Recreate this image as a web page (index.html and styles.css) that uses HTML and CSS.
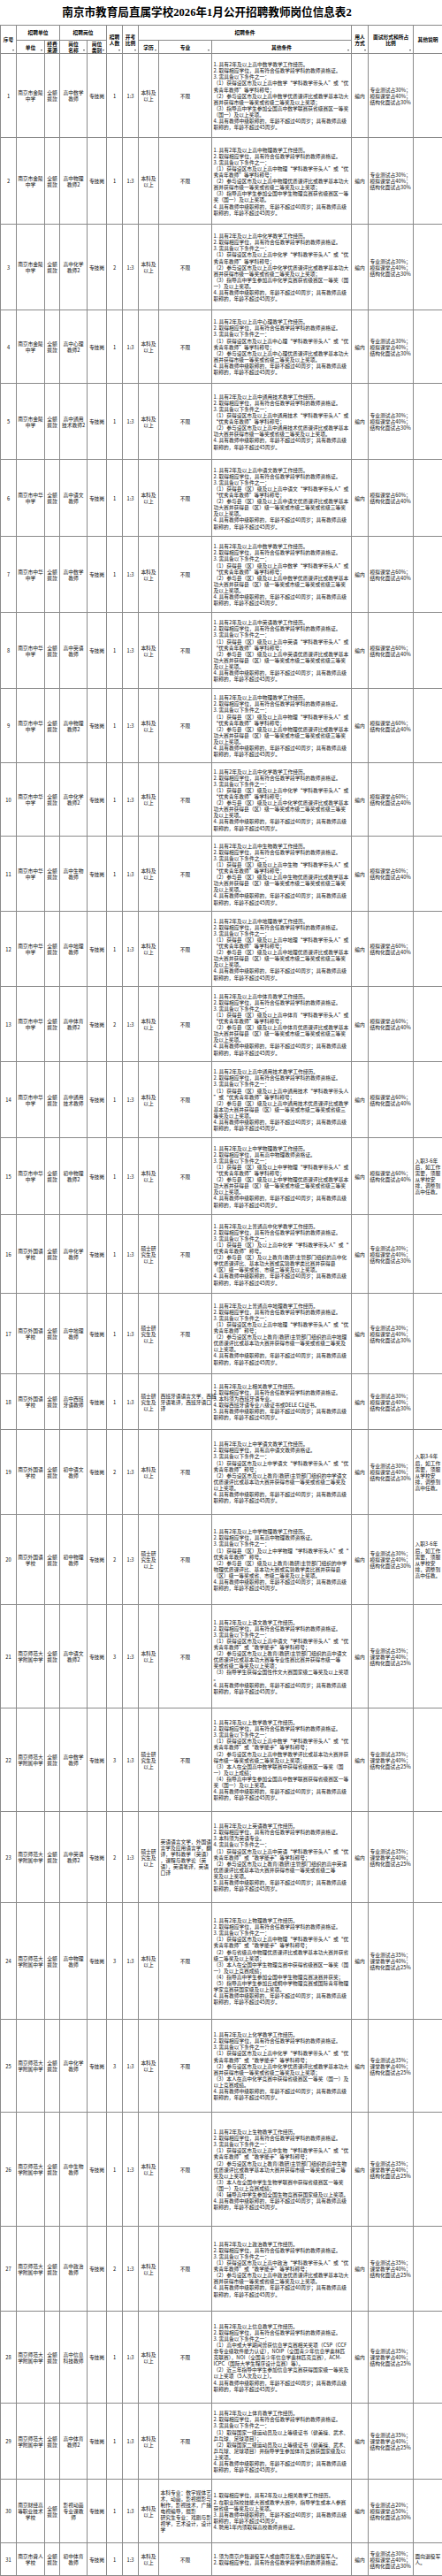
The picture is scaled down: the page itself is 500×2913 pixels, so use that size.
FILE: index.html
```html
<!DOCTYPE html>
<html lang="zh-CN">
<head>
<meta charset="utf-8">
<title>南京市教育局直属学校2026年1月公开招聘教师岗位信息表2</title>
<link rel="stylesheet" href="styles.css">
</head>
<body>
<table class="sheet">
<colgroup>
<col class="k1"><col class="k2"><col class="k3"><col class="k4"><col class="k5"><col class="k6"><col class="k7"><col class="k8"><col class="k9"><col class="k10"><col class="k11"><col class="k12"><col class="k13">
</colgroup>
<thead>
<tr class="title"><td colspan="12">南京市教育局直属学校2026年1月公开招聘教师岗位信息表2</td><td></td></tr>
<tr class="h1">
<th rowspan="2">序号<i class="dd"></i></th>
<th colspan="2">招聘单位</th>
<th colspan="2">招聘岗位</th>
<th rowspan="2">招聘<br>人数<i class="dd"></i></th>
<th rowspan="2">开考<br>比例<i class="dd"></i></th>
<th colspan="3">招聘条件</th>
<th rowspan="2">用人<br>方式<i class="dd"></i></th>
<th rowspan="2">面试形式和所占<br>比例<i class="dd"></i></th>
<th rowspan="2">其他说明</th>
</tr>
<tr class="h2">
<th>单位<i class="dd"></i></th>
<th>经费<br>来源<i class="dd"></i></th>
<th>岗位<br>名称<i class="dd"></i></th>
<th>岗位<br>类别<i class="dd"></i></th>
<th>学历<i class="dd"></i></th>
<th>专业<i class="dd"></i></th>
<th>其他条件<i class="dd"></i></th>
</tr>
</thead>
<tbody>
<tr><td>1</td><td>南京市金陵<br>中学</td><td>全额<br>拨款</td><td>高中数学<br>教师</td><td>专技岗</td><td>1</td><td>1:3</td><td>本科及<br>以上</td><td>不限</td>
<td class="l">1. 具有2年及以上高中数学教学工作经历。<br>2. 取得相应学位，具有符合任教学段学科的教师资格证。<br>3. 需具备以下条件之一：<br>（1）获得设区市及以上高中数学“学科教学带头人”或“优<br>秀青年教师”等学科称号；<br>（2）参与设区市及以上高中数学优质课评比或教学基本功大<br>赛并获得市级一等奖或省级二等奖及以上奖项；<br>（3）指导高中学生参加全国高中数学联赛获省级赛区一等奖<br>（国一）及以上奖项。<br>4. 具有教师中级职称的，年龄不超过40周岁；具有教师高级<br>职称的，年龄不超过45周岁。</td>
<td>编内</td><td class="l">专业测试占30%；<br>模拟课堂占40%；<br>结构化面试占30%</td><td></td></tr>

<tr><td>2</td><td>南京市金陵<br>中学</td><td>全额<br>拨款</td><td>高中物理<br>教师2</td><td>专技岗</td><td>1</td><td>1:3</td><td>本科及<br>以上</td><td>不限</td>
<td class="l">1. 具有2年及以上高中物理教学工作经历。<br>2. 取得相应学位，具有符合任教学段学科的教师资格证。<br>3. 需具备以下条件之一：<br>（1）获得设区市及以上高中物理“学科教学带头人”或“优<br>秀青年教师”等学科称号；<br>（2）参与设区市及以上高中物理优质课评比或教学基本功大<br>赛并获得市级一等奖或省级二等奖及以上奖项；<br>（3）指导高中学生参加全国中学生物理竞赛获省级赛区一等<br>奖（国一）及以上奖项。<br>4. 具有教师中级职称的，年龄不超过40周岁；具有教师高级<br>职称的，年龄不超过45周岁。</td>
<td>编内</td><td class="l">专业测试占30%；<br>模拟课堂占40%；<br>结构化面试占30%</td><td></td></tr>

<tr><td>3</td><td>南京市金陵<br>中学</td><td>全额<br>拨款</td><td>高中化学<br>教师2</td><td>专技岗</td><td>2</td><td>1:3</td><td>本科及<br>以上</td><td>不限</td>
<td class="l">1. 具有2年及以上高中化学教学工作经历。<br>2. 取得相应学位，具有符合任教学段学科的教师资格证。<br>3. 需具备以下条件之一：<br>（1）获得设区市及以上高中化学“学科教学带头人”或“优<br>秀青年教师”等学科称号；<br>（2）参与设区市及以上高中化学优质课评比或教学基本功大<br>赛并获得市级一等奖或省级二等奖及以上奖项；<br>（3）指导高中学生参加高中化学竞赛获省级赛区一等奖（国<br>一）及以上奖项。<br>4. 具有教师中级职称的，年龄不超过40周岁；具有教师高级<br>职称的，年龄不超过45周岁。</td>
<td>编内</td><td class="l">专业测试占30%；<br>模拟课堂占40%；<br>结构化面试占30%</td><td></td></tr>

<tr><td>4</td><td>南京市金陵<br>中学</td><td>全额<br>拨款</td><td>高中心理<br>教师2</td><td>专技岗</td><td>1</td><td>1:3</td><td>本科及<br>以上</td><td>不限</td>
<td class="l">1. 具有2年及以上高中心理教学工作经历。<br>2. 取得相应学位，具有符合任教学段学科的教师资格证。<br>3. 需具备以下条件之一：<br>（1）获得设区市及以上高中心理“学科教学带头人”或“优<br>秀青年教师”等学科称号；<br>（2）参与设区市及以上高中心理优质课评比或教学基本功大<br>赛并获得市级一等奖或省级二等奖及以上奖项。<br>4. 具有教师中级职称的，年龄不超过40周岁；具有教师高级<br>职称的，年龄不超过45周岁。</td>
<td>编内</td><td class="l">专业测试占30%；<br>模拟课堂占40%；<br>结构化面试占30%</td><td></td></tr>

<tr><td>5</td><td>南京市金陵<br>中学</td><td>全额<br>拨款</td><td>高中通用<br>技术教师2</td><td>专技岗</td><td>1</td><td>1:3</td><td>本科及<br>以上</td><td>不限</td>
<td class="l">1. 具有2年及以上高中通用技术教学工作经历。<br>2. 取得相应学位，具有符合任教学段学科的教师资格证。<br>3. 需具备以下条件之一：<br>（1）获得设区市及以上高中通用技术“学科教学带头人”或<br>“优秀青年教师”等学科称号；<br>（2）参与设区市及以上高中通用技术优质课评比或教学基本<br>功大赛并获得市级一等奖或省级二等奖及以上奖项。<br>4. 具有教师中级职称的，年龄不超过40周岁；具有教师高级<br>职称的，年龄不超过45周岁。</td>
<td>编内</td><td class="l">专业测试占30%；<br>模拟课堂占40%；<br>结构化面试占30%</td><td></td></tr>

<tr><td>6</td><td>南京市中华<br>中学</td><td>全额<br>拨款</td><td>高中语文<br>教师</td><td>专技岗</td><td>1</td><td>1:3</td><td>本科及<br>以上</td><td>不限</td>
<td class="l">1. 具有2年及以上高中语文教学工作经历。<br>2. 取得相应学位，具有符合任教学段学科的教师资格证。<br>3. 需具备以下条件之一：<br>（1）获得县（区）级及以上高中语文“学科教学带头人”或<br>“优秀青年教师”等学科称号；<br>（2）参与县（区）级及以上高中语文优质课评比或教学基本<br>功大赛并获得县（区）级一等奖或市级二等奖或省级三等奖<br>及以上奖项。<br>4. 具有教师中级职称的，年龄不超过40周岁；具有教师高级<br>职称的，年龄不超过45周岁。</td>
<td>编内</td><td class="l">模拟课堂占60%；<br>结构化面试占40%</td><td></td></tr>

<tr><td>7</td><td>南京市中华<br>中学</td><td>全额<br>拨款</td><td>高中数学<br>教师</td><td>专技岗</td><td>1</td><td>1:3</td><td>本科及<br>以上</td><td>不限</td>
<td class="l">1. 具有2年及以上高中数学教学工作经历。<br>2. 取得相应学位，具有符合任教学段学科的教师资格证。<br>3. 需具备以下条件之一：<br>（1）获得县（区）级及以上高中数学“学科教学带头人”或<br>“优秀青年教师”等学科称号；<br>（2）参与县（区）级及以上高中数学优质课评比或教学基本<br>功大赛并获得县（区）级一等奖或市级二等奖或省级三等奖<br>及以上奖项。<br>4. 具有教师中级职称的，年龄不超过40周岁；具有教师高级<br>职称的，年龄不超过45周岁。</td>
<td>编内</td><td class="l">模拟课堂占60%；<br>结构化面试占40%</td><td></td></tr>

<tr><td>8</td><td>南京市中华<br>中学</td><td>全额<br>拨款</td><td>高中英语<br>教师</td><td>专技岗</td><td>1</td><td>1:3</td><td>本科及<br>以上</td><td>不限</td>
<td class="l">1. 具有2年及以上高中英语教学工作经历。<br>2. 取得相应学位，具有符合任教学段学科的教师资格证。<br>3. 需具备以下条件之一：<br>（1）获得县（区）级及以上高中英语“学科教学带头人”或<br>“优秀青年教师”等学科称号；<br>（2）参与县（区）级及以上高中英语优质课评比或教学基本<br>功大赛并获得县（区）级一等奖或市级二等奖或省级三等奖<br>及以上奖项。<br>4. 具有教师中级职称的，年龄不超过40周岁；具有教师高级<br>职称的，年龄不超过45周岁。</td>
<td>编内</td><td class="l">模拟课堂占60%；<br>结构化面试占40%</td><td></td></tr>

<tr><td>9</td><td>南京市中华<br>中学</td><td>全额<br>拨款</td><td>高中物理<br>教师2</td><td>专技岗</td><td>1</td><td>1:3</td><td>本科及<br>以上</td><td>不限</td>
<td class="l">1. 具有2年及以上高中物理教学工作经历。<br>2. 取得相应学位，具有符合任教学段学科的教师资格证。<br>3. 需具备以下条件之一：<br>（1）获得县（区）级及以上高中物理“学科教学带头人”或<br>“优秀青年教师”等学科称号；<br>（2）参与县（区）级及以上高中物理优质课评比或教学基本<br>功大赛并获得县（区）级一等奖或市级二等奖或省级三等奖<br>及以上奖项。<br>4. 具有教师中级职称的，年龄不超过40周岁；具有教师高级<br>职称的，年龄不超过45周岁。</td>
<td>编内</td><td class="l">模拟课堂占60%；<br>结构化面试占40%</td><td></td></tr>

<tr><td>10</td><td>南京市中华<br>中学</td><td>全额<br>拨款</td><td>高中化学<br>教师2</td><td>专技岗</td><td>1</td><td>1:3</td><td>本科及<br>以上</td><td>不限</td>
<td class="l">1. 具有2年及以上高中化学教学工作经历。<br>2. 取得相应学位，具有符合任教学段学科的教师资格证。<br>3. 需具备以下条件之一：<br>（1）获得县（区）级及以上高中化学“学科教学带头人”或<br>“优秀青年教师”等学科称号；<br>（2）参与县（区）级及以上高中化学优质课评比或教学基本<br>功大赛并获得县（区）级一等奖或市级二等奖或省级三等奖<br>及以上奖项。<br>4. 具有教师中级职称的，年龄不超过40周岁；具有教师高级<br>职称的，年龄不超过45周岁。</td>
<td>编内</td><td class="l">模拟课堂占60%；<br>结构化面试占40%</td><td></td></tr>

<tr><td>11</td><td>南京市中华<br>中学</td><td>全额<br>拨款</td><td>高中生物<br>教师</td><td>专技岗</td><td>1</td><td>1:3</td><td>本科及<br>以上</td><td>不限</td>
<td class="l">1. 具有2年及以上高中生物教学工作经历。<br>2. 取得相应学位，具有符合任教学段学科的教师资格证。<br>3. 需具备以下条件之一：<br>（1）获得县（区）级及以上高中生物“学科教学带头人”或<br>“优秀青年教师”等学科称号；<br>（2）参与县（区）级及以上高中生物优质课评比或教学基本<br>功大赛并获得县（区）级一等奖或市级二等奖或省级三等奖<br>及以上奖项。<br>4. 具有教师中级职称的，年龄不超过40周岁；具有教师高级<br>职称的，年龄不超过45周岁。</td>
<td>编内</td><td class="l">模拟课堂占60%；<br>结构化面试占40%</td><td></td></tr>

<tr><td>12</td><td>南京市中华<br>中学</td><td>全额<br>拨款</td><td>高中地理<br>教师</td><td>专技岗</td><td>1</td><td>1:3</td><td>本科及<br>以上</td><td>不限</td>
<td class="l">1. 具有2年及以上高中地理教学工作经历。<br>2. 取得相应学位，具有符合任教学段学科的教师资格证。<br>3. 需具备以下条件之一：<br>（1）获得县（区）级及以上高中地理“学科教学带头人”或<br>“优秀青年教师”等学科称号；<br>（2）参与县（区）级及以上高中地理优质课评比或教学基本<br>功大赛并获得县（区）级一等奖或市级二等奖或省级三等奖<br>及以上奖项。<br>4. 具有教师中级职称的，年龄不超过40周岁；具有教师高级<br>职称的，年龄不超过45周岁。</td>
<td>编内</td><td class="l">模拟课堂占60%；<br>结构化面试占40%</td><td></td></tr>

<tr><td>13</td><td>南京市中华<br>中学</td><td>全额<br>拨款</td><td>高中体育<br>教师2</td><td>专技岗</td><td>2</td><td>1:3</td><td>本科及<br>以上</td><td>不限</td>
<td class="l">1. 具有2年及以上高中体育教学工作经历。<br>2. 取得相应学位，具有符合任教学段学科的教师资格证。<br>3. 需具备以下条件之一：<br>（1）获得县（区）级及以上高中体育“学科教学带头人”或<br>“优秀青年教师”等学科称号；<br>（2）参与县（区）级及以上高中体育优质课评比或教学基本<br>功大赛并获得县（区）级一等奖或市级二等奖或省级三等奖<br>及以上奖项。<br>4. 具有教师中级职称的，年龄不超过40周岁；具有教师高级<br>职称的，年龄不超过45周岁。</td>
<td>编内</td><td class="l">模拟课堂占60%；<br>结构化面试占40%</td><td></td></tr>

<tr><td>14</td><td>南京市中华<br>中学</td><td>全额<br>拨款</td><td>高中通用<br>技术教师</td><td>专技岗</td><td>1</td><td>1:3</td><td>本科及<br>以上</td><td>不限</td>
<td class="l">1. 具有2年及以上高中通用技术教学工作经历。<br>2. 取得相应学位，具有符合任教学段学科的教师资格证。<br>3. 需具备以下条件之一：<br>（1）获得县（区）级及以上高中通用技术“学科教学带头人<br>”或“优秀青年教师”等学科称号；<br>（2）参与县（区）级及以上高中通用技术优质课评比或教学<br>基本功大赛并获得县（区）级一等奖或市级二等奖或省级三<br>等奖及以上奖项。<br>4. 具有教师中级职称的，年龄不超过40周岁；具有教师高级<br>职称的，年龄不超过45周岁。</td>
<td>编内</td><td class="l">模拟课堂占60%；<br>结构化面试占40%</td><td></td></tr>

<tr><td>15</td><td>南京市中华<br>中学</td><td>全额<br>拨款</td><td>初中物理<br>教师2</td><td>专技岗</td><td>1</td><td>1:3</td><td>本科及<br>以上</td><td>不限</td>
<td class="l">1. 具有2年及以上中学物理教学工作经历。<br>2. 取得相应学位，具有高中物理教师资格证。<br>3. 需具备以下条件之一：<br>（1）获得县（区）级及以上中学物理“学科教学带头人”或<br>“优秀青年教师”等学科称号；<br>（2）参与县（区）级及以上中学物理优质课评比或教学基本<br>功大赛并获得县（区）级一等奖或市级二等奖或省级三等奖<br>及以上奖项。<br>4. 具有教师中级职称的，年龄不超过40周岁；具有教师高级<br>职称的，年龄不超过45周岁。</td>
<td>编内</td><td class="l">模拟课堂占60%；<br>结构化面试占40%</td><td class="l">入职3-6年<br>后，如工作<br>需要，须服<br>从学校安<br>排，调整到<br>高中任教。</td></tr>

<tr><td>16</td><td>南京外国语<br>学校</td><td>全额<br>拨款</td><td>高中化学<br>教师</td><td>专技岗</td><td>1</td><td>1:3</td><td>硕士研<br>究生及<br>以上</td><td>不限</td>
<td class="l">1. 具有2年及以上普通高中化学教学工作经历。<br>2. 取得相应学位，具有符合任教学段学科的教师资格证。<br>3. 需具备以下条件之一：<br>（1）获得县（区）及以上高中化学“学科教学带头人”或“<br>优秀青年教师”称号。<br>（2）参与县（区）及以上教育(教研)主管部门组织的高中化<br>学优质课评比、基本功大赛或实验教学类比赛并获得县<br>（区）级一等奖或省、市级二等奖及以上奖项。<br>4. 具有教师中级职称的，年龄不超过40周岁；具有教师高级<br>职称的，年龄不超过45周岁。</td>
<td>编内</td><td class="l">专业测试占30%；<br>模拟课堂占40%；<br>结构化面试占30%</td><td></td></tr>

<tr><td>17</td><td>南京外国语<br>学校</td><td>全额<br>拨款</td><td>高中地理<br>教师</td><td>专技岗</td><td>1</td><td>1:3</td><td>硕士研<br>究生及<br>以上</td><td>不限</td>
<td class="l">1. 具有2年及以上普通高中地理教学工作经历。<br>2. 取得相应学位，具有符合任教学段学科的教师资格证。<br>3. 需具备以下条件之一：<br>（1）获得设区市及以上高中地理“学科教学带头人”或“优<br>秀青年教师”称号；<br>（2）参与设区市及以上教育(教研)主管部门组织的高中地理<br>优质课评比或基本功大赛并获得市级一等奖或省级二等奖及<br>以上奖项。<br>4. 具有教师中级职称的，年龄不超过40周岁；具有教师高级<br>职称的，年龄不超过45周岁。</td>
<td>编内</td><td class="l">专业测试占30%；<br>模拟课堂占40%；<br>结构化面试占30%</td><td></td></tr>

<tr><td>18</td><td>南京外国语<br>学校</td><td>全额<br>拨款</td><td>高中西班<br>牙语教师</td><td>专技岗</td><td>1</td><td>1:3</td><td>硕士研<br>究生及<br>以上</td><td class="l">西班牙语语言文学，西班<br>牙语笔译，西班牙语口<br>译</td>
<td class="l">1. 具有2年及以上相关教学工作经历。<br>2. 取得相应学位，具有符合任教学段学科的教师资格证。<br>3. 本科须为西班牙语专业。<br>4. 取得西班牙语专业八级证书或DELE C1证书。<br>5. 具有教师中级职称的，年龄不超过40周岁；具有教师高级<br>职称的，年龄不超过45周岁。</td>
<td>编内</td><td class="l">专业测试占30%；<br>模拟课堂占40%；<br>结构化面试占30%</td><td></td></tr>

<tr><td>19</td><td>南京外国语<br>学校</td><td>全额<br>拨款</td><td>初中语文<br>教师</td><td>专技岗</td><td>2</td><td>1:3</td><td>本科及<br>以上</td><td>不限</td>
<td class="l">1. 具有2年及以上中学语文教学工作经历。<br>2. 取得相应学位，具有高中语文教师资格证。<br>3. 需具备以下条件之一：<br>（1）获得设区市及以上中学语文“学科教学带头人”或“优<br>秀青年教师”称号；<br>（2）参与设区市及以上教育(教研)主管部门组织的中学语文<br>优质课评比或基本功大赛并获得市级一等奖或省级二等奖及<br>以上奖项。<br>4. 具有教师中级职称的，年龄不超过40周岁；具有教师高级<br>职称的，年龄不超过45周岁。</td>
<td>编内</td><td class="l">专业测试占30%；<br>模拟课堂占40%；<br>结构化面试占30%</td><td class="l">入职3-6年<br>后，如工作<br>需要，须服<br>从学校安<br>排，调整到<br>高中任教。</td></tr>

<tr><td>20</td><td>南京外国语<br>学校</td><td>全额<br>拨款</td><td>初中物理<br>教师</td><td>专技岗</td><td>2</td><td>1:3</td><td>硕士研<br>究生及<br>以上</td><td>不限</td>
<td class="l">1. 具有2年及以上中学物理教学工作经历。<br>2. 取得相应学位，具有高中物理教师资格证。<br>3. 需具备以下条件之一：<br>（1）获得县（区）及以上中学物理“学科教学带头人”或“<br>优秀青年教师”称号。<br>（2）参与县（区）级及以上教育(教研)主管部门组织的中学<br>物理优质课评比、基本功大赛或实验教学类比赛并获得县<br>（区）级一等奖或省、市级二等奖及以上奖项。<br>4. 具有教师中级职称的，年龄不超过40周岁；具有教师高级<br>职称的，年龄不超过45周岁。</td>
<td>编内</td><td class="l">专业测试占30%；<br>模拟课堂占40%；<br>结构化面试占30%</td><td class="l">入职3-6年<br>后，如工作<br>需要，须服<br>从学校安<br>排，调整到<br>高中任教。</td></tr>

<tr><td>21</td><td>南京师范大<br>学附属中学</td><td>全额<br>拨款</td><td>高中语文<br>教师2</td><td>专技岗</td><td>3</td><td>1:3</td><td>本科及<br>以上</td><td>不限</td>
<td class="l">1. 具有2年及以上语文教学工作经历。<br>2. 取得相应学位，具有符合任教学段学科的教师资格证。<br>3. 需具备以下条件之一：<br>（1）获得设区市及以上高中语文“学科教学带头人”或“优<br>秀青年教师”或“教学能手”等学科称号；<br>（2）参与设区市及以上教育(教研)主管部门组织的高中语文<br>优质课评比或基本功大赛等专业性赛比赛并获得市级一等<br>奖或省级二等奖及以上奖项；<br>（3）指导学生获得全国性作文大赛国家级二等奖及以上奖项<br>。<br>4. 具有教师中级职称的，年龄不超过40周岁；具有教师高级<br>职称的，年龄不超过45周岁。</td>
<td>编内</td><td class="l">专业测试占35%；<br>课堂教学占40%；<br>结构化面试占25%</td><td></td></tr>

<tr><td>22</td><td>南京师范大<br>学附属中学</td><td>全额<br>拨款</td><td>高中数学<br>教师</td><td>专技岗</td><td>3</td><td>1:3</td><td>硕士研<br>究生及<br>以上</td><td>不限</td>
<td class="l">1. 具有2年及以上数学教学工作经历。<br>2. 取得相应学位，具有符合任教学段学科的教师资格证。<br>3. 需具备以下条件之一：<br>（1）获得设区市及以上高中数学“学科教学带头人”或“优<br>秀青年教师”或“教学能手”等学科称号；<br>（2）参与设区市及以上高中数学教学评比或基本功大赛并获<br>得市级一等奖或省级二等奖及以上奖项；<br>（3）本人在全国高中数学联赛中获得省级赛区一等奖（国<br>一）及以上成绩；<br>（4）指导高中学生参加全国高中数学联赛获得省级赛区一等<br>奖（国一）及以上奖项。<br>4. 具有教师中级职称的，年龄不超过40周岁；具有教师高级<br>职称的，年龄不超过45周岁。</td>
<td>编内</td><td class="l">专业测试占35%；<br>课堂教学占40%；<br>结构化面试占25%</td><td></td></tr>

<tr><td>23</td><td>南京师范大<br>学附属中学</td><td>全额<br>拨款</td><td>高中英语<br>教师2</td><td>专技岗</td><td>2</td><td>1:3</td><td>硕士研<br>究生及<br>以上</td><td class="l">英语语言文学，外国语<br>言学及应用语言学，翻<br>译，学科教学（英语）<br>，课程与教学论（英<br>语），英语笔译，英语<br>口译</td>
<td class="l">1. 具有2年及以上英语教学工作经历。<br>2. 取得相应学位，具有符合任教学段学科的教师资格证。<br>3. 本科须为英语专业。<br>4. 需具备以下条件之一：<br>（1）获得设区市及以上高中英语“学科教学带头人”或“优<br>秀青年教师”或“教学能手”等学科称号；<br>（2）参与设区市及以上教育(教研)主管部门组织的高中英语<br>优质课评比或基本功大赛并获得市级一等奖或省级二等<br>奖及以上奖项。<br>5. 具有教师中级职称的，年龄不超过40周岁；具有教师高级<br>职称的，年龄不超过45周岁。</td>
<td>编内</td><td class="l">专业测试占35%；<br>课堂教学占40%；<br>结构化面试占25%</td><td></td></tr>

<tr><td>24</td><td>南京师范大<br>学附属中学</td><td>全额<br>拨款</td><td>高中物理<br>教师</td><td>专技岗</td><td>3</td><td>1:3</td><td>本科及<br>以上</td><td>不限</td>
<td class="l">1. 具有2年及以上物理教学工作经历。<br>2. 取得相应学位，具有符合任教学段学科的教师资格证。<br>3. 需具备以下条件之一：<br>（1）获得设区市及以上高中物理“学科教学带头人”或“优<br>秀青年教师”或“教学能手”等学科称号；<br>（2）参与省级高中物理优质课评比或教学基本功大赛并获省<br>级二等奖及以上奖项；<br>（3）本人在全国中学生物理竞赛中获得省级赛区一等奖（国<br>一）及以上竞赛成绩；<br>（4）指导高中学生参加全国中学生物理竞赛决赛并获奖；<br>（5）指导高中学生参加丘成桐中学物理竞赛或国际青年物理<br>学家竞赛获国家级及以上奖项。<br>4. 具有教师中级职称的，年龄不超过40周岁；具有教师高级<br>职称的，年龄不超过45周岁。</td>
<td>编内</td><td class="l">专业测试占35%；<br>课堂教学占40%；<br>结构化面试占25%</td><td></td></tr>

<tr><td>25</td><td>南京师范大<br>学附属中学</td><td>全额<br>拨款</td><td>高中化学<br>教师</td><td>专技岗</td><td>3</td><td>1:3</td><td>本科及<br>以上</td><td>不限</td>
<td class="l">1. 具有2年及以上化学教学工作经历。<br>2. 取得相应学位，具有符合任教学段学科的教师资格证。<br>3. 需具备以下条件之一：<br>（1）获得设区市及以上高中化学“学科教学带头人”或“优<br>秀青年教师”或“教学能手”等学科称号；<br>（2）参与设区市及以上高中化学优质课评比或教学基本功大<br>赛并获得市级一等奖或省级二等奖及以上奖项；<br>（3）本人在高中化学竞赛中获得省级赛区一等奖（国一）及<br>以上竞赛成绩。<br>4. 具有教师中级职称的，年龄不超过40周岁；具有教师高级<br>职称的，年龄不超过45周岁。</td>
<td>编内</td><td class="l">专业测试占35%；<br>课堂教学占40%；<br>结构化面试占25%</td><td></td></tr>

<tr><td>26</td><td>南京师范大<br>学附属中学</td><td>全额<br>拨款</td><td>高中生物<br>教师</td><td>专技岗</td><td>1</td><td>1:3</td><td>本科及<br>以上</td><td>不限</td>
<td class="l">1. 具有2年及以上生物教学工作经历。<br>2. 取得相应学位，具有符合任教学段学科的教师资格证。<br>3. 需具备以下条件之一：<br>（1）获得设区市及以上高中生物“学科教学带头人”或“优<br>秀青年教师”或“教学能手”等学科称号；<br>（2）参与设区市及以上教育(教研)主管部门组织的高中生物<br>优质课评比或教学基本功大赛并获得市级一等奖或省级二等<br>奖及以上奖项；<br>（3）本人在全国中学生生物学联赛中获得省级赛区一等奖<br>（国一）及以上竞赛成绩；<br>（4）辅导高中学生参加全国生物竞赛获国家级及以上奖项。<br>4. 具有教师中级职称的，年龄不超过40周岁；具有教师高级<br>职称的，年龄不超过45周岁。</td>
<td>编内</td><td class="l">专业测试占35%；<br>课堂教学占40%；<br>结构化面试占25%</td><td></td></tr>

<tr><td>27</td><td>南京师范大<br>学附属中学</td><td>全额<br>拨款</td><td>高中政治<br>教师</td><td>专技岗</td><td>2</td><td>1:3</td><td>本科及<br>以上</td><td>不限</td>
<td class="l">1. 具有2年及以上政治教学工作经历。<br>2. 取得相应学位，具有符合任教学段学科的教师资格证。<br>3. 需具备以下条件之一：<br>（1）获得设区市及以上高中政治“学科教学带头人”或“优<br>秀青年教师”或“教学能手”等学科称号；<br>（2）参与设区市及以上高中政治优质课评比或教学基本功大<br>赛并获得市级一等奖或省级二等奖及以上奖项。<br>4. 具有教师中级职称的，年龄不超过40周岁；具有教师高级<br>职称的，年龄不超过45周岁。</td>
<td>编内</td><td class="l">专业测试占35%；<br>课堂教学占40%；<br>结构化面试占25%</td><td></td></tr>

<tr><td>28</td><td>南京师范大<br>学附属中学</td><td>全额<br>拨款</td><td>高中信息<br>科技教师</td><td>专技岗</td><td>1</td><td>1:3</td><td>本科及<br>以上</td><td>不限</td>
<td class="l">1. 具有2年及以上信息教学工作经历。<br>2. 取得相应学位，具有符合任教学段学科的教师资格证。<br>3. 需具备以下条件之一：<br>（1）高中或大学期间曾获信息学竞赛相关奖项（CSP（CCF<br>非专业级软件能力认证），NOIP（全国青少年信息学奥林匹<br>克联赛），NOI（全国青少年信息学奥林匹克竞赛），ACM-<br>ICPC（国际大学生程序设计竞赛）等）。<br>（2）近三年指导中学生参加信息学竞赛获得国家级一等奖及<br>以上奖项（5人次及以上）。<br>4. 具有教师中级职称的，年龄不超过40周岁；具有教师高级<br>职称的，年龄不超过45周岁。</td>
<td>编内</td><td class="l">专业测试占35%；<br>课堂教学占40%；<br>结构化面试占25%</td><td></td></tr>

<tr><td>29</td><td>南京师范大<br>学附属中学</td><td>全额<br>拨款</td><td>高中体育<br>教师2</td><td>专技岗</td><td>1</td><td>1:3</td><td>本科及<br>以上</td><td>不限</td>
<td class="l">1. 具有2年及以上体育教学工作经历。<br>2. 取得相应学位，具有符合任教学段学科的教师资格证。<br>3. 需具备以下条件之一：<br>（1）取得国家一级运动员及以上等级证书（健美操、武术、<br>乒乓球、足球项目）；<br>（2）取得国家二级运动员及以上等级证书（健美操、武术、<br>乒乓球、足球项目）并指导学生参加体育竞赛获国家级及以<br>上奖项。<br>4. 具有教师中级职称的，年龄不超过40周岁；具有教师高级<br>职称的，年龄不超过45周岁。</td>
<td>编内</td><td class="l">专业测试占35%；<br>课堂教学占40%；<br>结构化面试占25%</td><td></td></tr>

<tr><td>30</td><td>南京财经高<br>等职业技术<br>学校</td><td>全额<br>拨款</td><td>影视动画<br>专业课教<br>师</td><td>专技岗</td><td>1</td><td>1:3</td><td>本科及<br>以上</td><td class="l">本科专业：数字媒体艺<br>术，动画，影视摄影与<br>制作，影视技术，广播<br>电视编导，摄影<br>研究生专业：戏剧与影<br>视学，艺术设计，设计<br>学</td>
<td class="l">1. 取得相应学位，具有2年及以上相关教学工作经历。<br>2. 在职业院校技能大赛或教学大赛中，指导学生或本人参赛<br>获省级一等奖及以上奖项。<br>3. 具有教师中级职称的，年龄不超过40周岁；具有教师高级<br>职称的，年龄不超过45周岁。<br>4. 聘用1年内须取得高校教师资格证。</td>
<td>编内</td><td class="l">专业测试占20%；<br>模拟课堂占50%；<br>结构化面试占30%</td><td></td></tr>

<tr><td>31</td><td>南京市聋人<br>学校</td><td>全额<br>拨款</td><td>初中体育<br>教师</td><td>专技岗</td><td>1</td><td>1:3</td><td>本科及<br>以上</td><td>不限</td>
<td class="l">1. 须为南京户籍退役军人或由南京批准入伍的退役军人。<br>2. 取得相应学位，具有符合任教学段学科的教师资格证。</td>
<td>编内</td><td class="l">专业测试占30%；<br>模拟课堂占40%；<br>结构化面试占30%</td><td class="l">面向退役军<br>人。</td></tr>
</tbody>
</table>
</body>
</html>
```

FILE: styles.css
```css
html, body {
  margin: 0;
  padding: 0;
  background: #ffffff;
}

body {
  font-family: "Noto Sans CJK SC", "Liberation Serif", sans-serif;
  color: #0d0d0d;
}

.sheet {
  border-collapse: collapse;
  table-layout: fixed;
  width: 500px;
}

.k1 { width: 18px; }
.k2 { width: 32px; }
.k3 { width: 17px; }
.k4 { width: 31px; }
.k5 { width: 22px; }
.k6 { width: 18px; }
.k7 { width: 18px; }
.k8 { width: 23px; }
.k9 { width: 60px; }
.k10 { width: 158px; }
.k11 { width: 19px; }
.k12 { width: 51px; }
.k13 { width: 33px; }

.sheet td,
.sheet th {
  border: 1px solid #8a8a8a;
  padding: 0;
  font-size: 5.75px;
  line-height: 7.1px;
  vertical-align: middle;
  text-align: center;
  white-space: nowrap;
}

.sheet th {
  font-weight: bold;
  position: relative;
  color: #000;
}

.sheet td.l {
  text-align: left;
  padding-left: 1.5px;
}

.title td {
  border: none;
  height: 28px;
  padding: 0;
  font-family: "Liberation Serif", "Noto Sans CJK SC", serif;
  font-weight: bold;
  font-size: 12.6px;
  line-height: 14px;
  color: #000;
}

.h1 { height: 17px; }
.h2 { height: 15px; }

.dd {
  position: absolute;
  right: 1px;
  bottom: 1px;
  width: 4px;
  height: 4px;
}

.dd::after {
  content: "";
  position: absolute;
  left: 0.5px;
  top: 1px;
  border-left: 1.5px solid transparent;
  border-right: 1.5px solid transparent;
  border-top: 2px solid #555;
}

tbody tr:nth-child(1) { height: 95px; }
tbody tr:nth-child(2) { height: 98px; }
tbody tr:nth-child(3) { height: 97px; }
tbody tr:nth-child(4) { height: 83px; }
tbody tr:nth-child(5) { height: 86px; }
tbody tr:nth-child(6) { height: 87px; }
tbody tr:nth-child(7) { height: 86px; }
tbody tr:nth-child(8) { height: 86px; }
tbody tr:nth-child(9) { height: 84px; }
tbody tr:nth-child(10) { height: 83px; }
tbody tr:nth-child(11) { height: 85px; }
tbody tr:nth-child(12) { height: 85px; }
tbody tr:nth-child(13) { height: 85px; }
tbody tr:nth-child(14) { height: 86px; }
tbody tr:nth-child(15) { height: 87px; }
tbody tr:nth-child(16) { height: 89px; }
tbody tr:nth-child(17) { height: 91px; }
tbody tr:nth-child(18) { height: 63px; }
tbody tr:nth-child(19) { height: 96px; }
tbody tr:nth-child(20) { height: 102px; }
tbody tr:nth-child(21) { height: 117px; }
tbody tr:nth-child(22) { height: 117px; }
tbody tr:nth-child(23) { height: 103px; }
tbody tr:nth-child(24) { height: 132px; }
tbody tr:nth-child(25) { height: 105px; }
tbody tr:nth-child(26) { height: 129px; }
tbody tr:nth-child(27) { height: 96px; }
tbody tr:nth-child(28) { height: 104px; }
tbody tr:nth-child(29) { height: 86px; }
tbody tr:nth-child(30) { height: 72px; }
tbody tr:nth-child(31) { height: 37px; }
```
